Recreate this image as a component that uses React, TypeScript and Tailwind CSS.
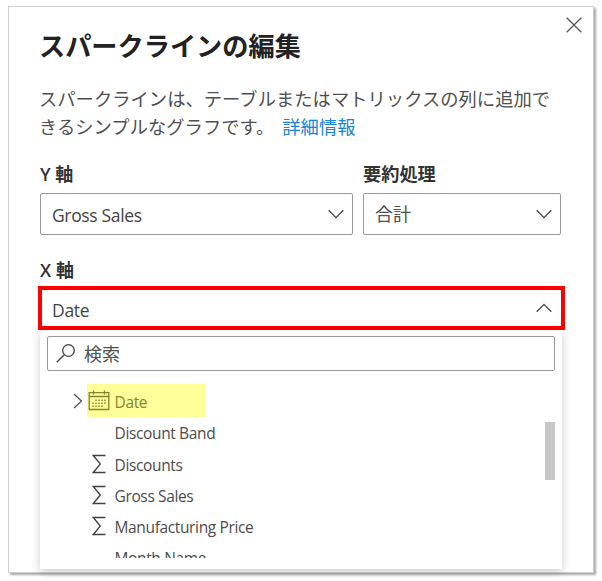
import React from 'react';

type Kind = 'sum' | 'date' | 'none';

const fields: { label: string; kind: Kind }[] = [
  { label: 'Date', kind: 'date' },
  { label: 'Discount Band', kind: 'none' },
  { label: 'Discounts', kind: 'sum' },
  { label: 'Gross Sales', kind: 'sum' },
  { label: 'Manufacturing Price', kind: 'sum' },
  { label: 'Month Name', kind: 'none' },
];

function Chevron({ up = false }: { up?: boolean }) {
  return (
    <svg width="16" height="10" viewBox="0 0 16 10" fill="none" stroke="#444" strokeWidth="1.3" className="shrink-0">
      <path d={up ? 'M.7 8.7 8 1.4l7.3 7.3' : 'M.7 1.3 8 8.6l7.3-7.3'} />
    </svg>
  );
}

function Sigma() {
  return (
    <svg width="14" height="20" viewBox="0 0 14 20" fill="none" stroke="#404040" strokeWidth="1.3">
      <path d="M13.5 1.5H1.3l7 8.5-7 8.5h12.2" />
    </svg>
  );
}

function Calendar() {
  return (
    <svg width="22" height="21" viewBox="0 0 22 21" fill="none" stroke="#85852f" strokeWidth="1.3">
      <path d="M1.2 2.7h19.6v16.8H1.2zM1.2 6.5h19.6M5.5.5v4M16.5.5v4" />
      <path d="M7.3 10.2H18.5M4.3 13.2h14.2M4.3 16.2h11" strokeWidth="1.4" strokeDasharray="1.4 1.6" />
    </svg>
  );
}

export default function App() {
  return (
    <div className="h-[581px] w-[602px] overflow-hidden bg-white pl-2 pt-1.5 font-['Open_Sans','Noto_Sans_CJK_JP',sans-serif] text-[#333]">
      <main className="h-[567px] w-[586px] border border-[#cfcfcf] bg-white pl-[31px] shadow-[2px_2px_2px_#aaa]">
        <header className="flex h-[73px] justify-between">
          <h1 className="-ml-px mt-[21px] text-[26.2px] font-bold leading-[36px] text-[#222]">スパークラインの編集</h1>
          <svg width="16" height="16" viewBox="0 0 16 16" fill="none" stroke="#555" strokeWidth="1.3" className="mr-[11px] mt-[10px]">
            <path d="m.7.7 14.6 14.6M15.3.7.7 15.3" />
          </svg>
        </header>
        <p className="-ml-px mt-[5px] whitespace-nowrap text-[18.3px] leading-[28px] tracking-[0.03px] text-[#505050]">
          スパークラインは、テーブルまたはマトリックスの列に追加で<br />
          きるシンプルなグラフです。<a className="ml-[8px] text-[#1683d8]">詳細情報</a>
        </p>

        <div className="mt-[19px] flex gap-[10px]">
          <section className="w-[313px]">
            <h2 className="h-[33px] text-[18px] font-semibold leading-[28px]">Y 軸</h2>
            <div className="flex h-[42px] items-center justify-between rounded-[2px] border border-[#999] pl-[11px] pr-[8px]">
              <span className="pt-px text-[17.5px] leading-[24px] tracking-[-0.35px] text-[#444]">Gross Sales</span>
              <Chevron />
            </div>
          </section>
          <section className="w-[198px]">
            <h2 className="h-[33px] text-[18.2px] font-bold leading-[28px]">要約処理</h2>
            <div className="flex h-[42px] items-center justify-between rounded-[2px] border border-[#999] pl-[11px] pr-[8px]">
              <span className="text-[18px] leading-[24px] text-[#505050]">合計</span>
              <Chevron />
            </div>
          </section>
        </div>

        <h2 className="mt-[21px] h-[30px] text-[18px] font-semibold leading-[28px]">X 軸</h2>
        <div className="-ml-[2px] flex h-[44px] w-[527px] items-center justify-between border-4 border-[#f00] pl-[10px] pr-[9px]">
          <span className="pt-[3px] text-[17.5px] leading-[24px] tracking-[-0.3px] text-[#444]">Date</span>
          <Chevron up />
        </div>

        <div className="h-[239px] w-[522px] bg-white px-[7px] pt-[6px] shadow-[0_3px_9px_rgba(0,0,0,0.2)]">
          <div className="flex h-[35px] w-[508px] items-center gap-[9px] rounded-[2px] border border-[#999] pl-[8px]">
            <svg width="19" height="19" viewBox="0 0 19 19" fill="none" stroke="#444" strokeWidth="1.3">
              <circle cx="12.5" cy="6.5" r="5.8" />
              <path d="M8.3 10.7.7 18.3" />
            </svg>
            <span className="text-[18px] leading-[24px] text-[#505050]">検索</span>
          </div>
          <div className="mt-[13px] flex h-[174px] justify-between overflow-hidden">
            <ul className="pt-[1px] text-[15.5px] text-[#4c4c4c]">
              {fields.map(({ label, kind }) => (
                <li key={label} className="flex h-[31.25px] items-center">
                  <span className="flex w-[40px] shrink-0 justify-end pr-[4px]">
                    {kind === 'date' && (
                      <svg width="10" height="16" viewBox="0 0 10 16" fill="none" stroke="#555" strokeWidth="1.3">
                        <path d="m1 1 7.5 7L1 15" />
                      </svg>
                    )}
                  </span>
                  <span className={kind === 'date' ? 'flex h-[33px] w-[119px] shrink-0 items-center bg-[#ffff99] text-[#85852f]' : 'flex h-[31px] items-center'}>
                    <span className="flex w-[27.5px] shrink-0 pl-px">
                      {kind === 'date' && <Calendar />}
                      {kind === 'sum' && <span className="pl-[4px] pt-px"><Sigma /></span>}
                    </span>
                    <span className="whitespace-nowrap pt-[3px] leading-[24px] tracking-[-0.36px]">{label}</span>
                  </span>
                </li>
              ))}
            </ul>
            <div className="mt-[38px] h-[58px] w-[10px] bg-[#c8c8c8]" />
          </div>
        </div>
      </main>
    </div>
  );
}
